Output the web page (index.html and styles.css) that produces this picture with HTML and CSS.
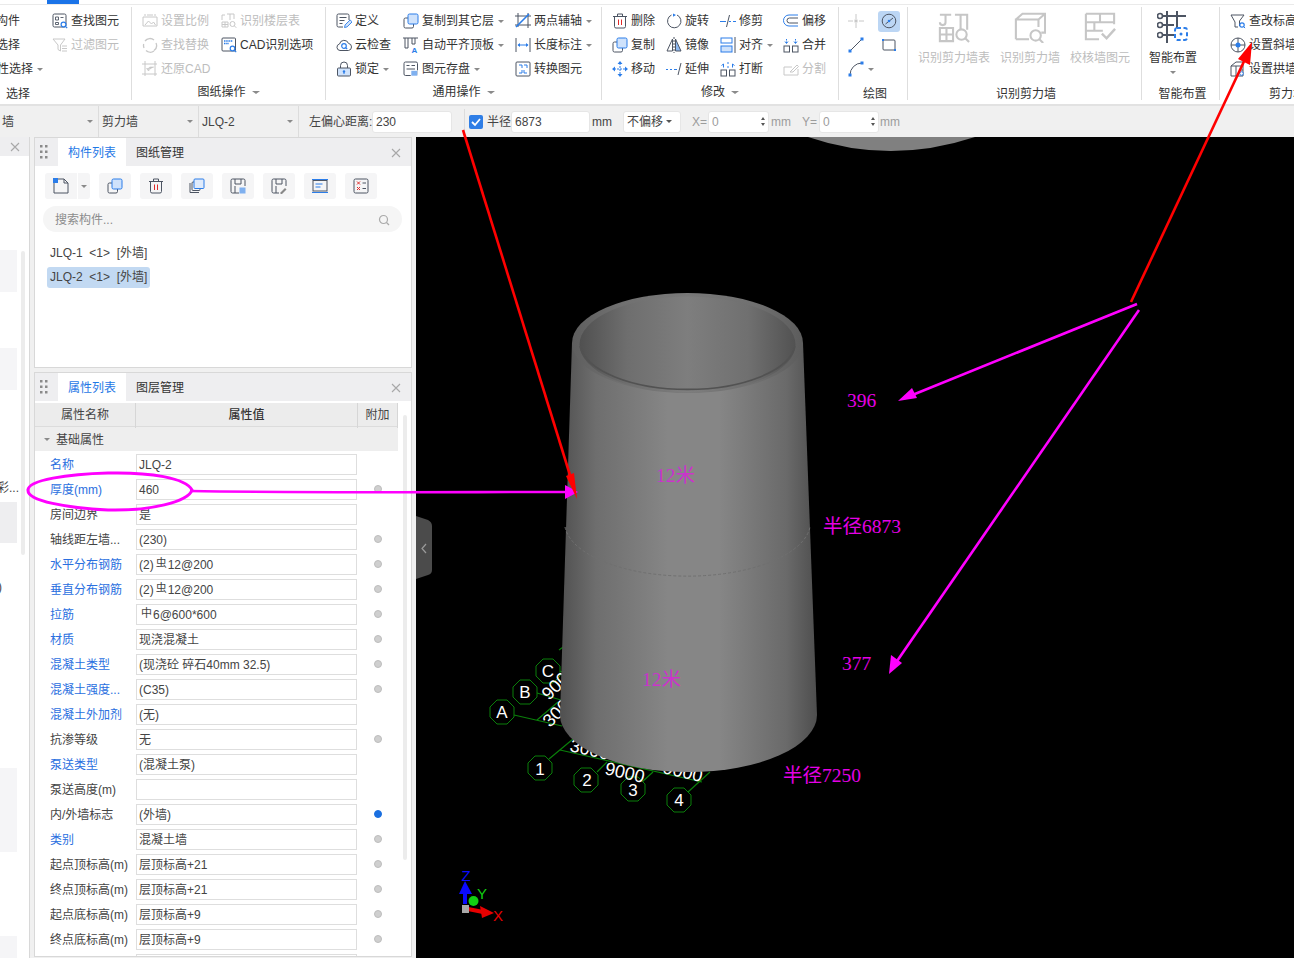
FILE: index.html
```html
<!DOCTYPE html>
<html lang="zh-CN">
<head>
<meta charset="utf-8">
<title>剪力墙</title>
<link rel="stylesheet" href="styles.css">
</head>
<body>
<svg class="defs" aria-hidden="true">
  <defs>
    <symbol id="i-find" viewBox="0 0 16 16"><rect x="1" y="1" width="13" height="13" rx="1.5" fill="none" stroke="#4d5563"/><path d="M3.5 4h3v3h-3zM8.5 4.5h3M3.5 9.5h3v2h-3z" fill="none" stroke="#4d5563" stroke-width=".9"/><circle cx="11.5" cy="11.5" r="2.4" fill="#fff" stroke="#2b7de9" stroke-width="1.2"/><path d="M13.2 13.2l2 2" stroke="#2b7de9" stroke-width="1.2"/></symbol>
    <symbol id="i-filter" viewBox="0 0 16 16"><path d="M1 2h12L8.5 8v6l-2.500-1.500V8z" fill="none" stroke="#c8c8c8"/><path d="M10 9h5M10 11.500h5M10 14h5" stroke="#c8c8c8"/></symbol>
    <symbol id="i-scale" viewBox="0 0 16 16"><path d="M1 4h14v9H1z" fill="none" stroke="#c8c8c8"/><path d="M3 1v2M13 1v2M5 2h6" stroke="#c8c8c8"/><path d="M3 12l3.500-4 3 3 2-2 2 3" fill="none" stroke="#c8c8c8"/></symbol>
    <symbol id="i-floors" viewBox="0 0 16 16"><path d="M1 2h3M1 2v5M6 1h7v5M9 1v6M1 9h6v5H1zM4 9v5M1 11.500h6" fill="none" stroke="#c8c8c8"/><circle cx="11.500" cy="11" r="2.500" fill="none" stroke="#c8c8c8"/><path d="M13.300 12.800l2 2" stroke="#c8c8c8"/></symbol>
    <symbol id="i-replace" viewBox="0 0 16 16"><path d="M3 4a6.200 6.200 0 0 1 9-1M14 6a6.200 6.200 0 0 1-2 7.500M12 14a6.200 6.200 0 0 1-8-.500M2 11a6.200 6.200 0 0 1-.3-4" fill="none" stroke="#c8c8c8" stroke-width="1.300"/></symbol>
    <symbol id="i-cad" viewBox="0 0 16 16"><rect x="1" y="1" width="13.500" height="13" rx="1" fill="none" stroke="#4d5563"/><path d="M3 4h9M3 6.500h5" stroke="#2b7de9" stroke-width="1.400" stroke-dasharray="1.500 .7"/><circle cx="11.500" cy="11.500" r="2.300" fill="#fff" stroke="#2b7de9" stroke-width="1.200"/><path d="M13.200 13.200l2 2" stroke="#2b7de9" stroke-width="1.200"/></symbol>
    <symbol id="i-restore" viewBox="0 0 16 16"><path d="M3 0v15M0 13h15M0 3h15M13 0v15" fill="none" stroke="#c8c8c8"/><path d="M12 6H8.500a2 2 0 0 0-2 2v1M6.500 10L4.500 7.500h4z" fill="#c8c8c8" stroke="#c8c8c8" stroke-width=".6"/></symbol>
    <symbol id="i-def" viewBox="0 0 16 16"><path d="M13 7V2.500A1.500 1.500 0 0 0 11.500 1h-9A1.500 1.500 0 0 0 1 2.500v10A1.500 1.500 0 0 0 2.500 14H7" fill="none" stroke="#4d5563"/><path d="M3.500 4.500h7M3.500 7.500h5M3.500 10.500h3" stroke="#4d5563"/><path d="M8.500 14.500l.6-2.600 5-5 2 2-5 5z" fill="#cfe2fb" stroke="#2b7de9" stroke-width=".9"/></symbol>
    <symbol id="i-cloud" viewBox="0 0 16 16"><path d="M4 13.500a3.300 3.300 0 0 1-.5-6.500 4.700 4.700 0 0 1 9-.6 3.600 3.600 0 0 1 0 7.100z" fill="none" stroke="#4d5563"/><circle cx="8" cy="9" r="2.300" fill="none" stroke="#2b7de9" stroke-width="1.200"/><path d="M9.700 10.700l1.500 1.500" stroke="#2b7de9" stroke-width="1.200"/></symbol>
    <symbol id="i-lock" viewBox="0 0 16 16"><path d="M4.500 7V4.500a3.500 3.500 0 0 1 7 0V7" fill="none" stroke="#4d5563"/><rect x="1.500" y="7" width="13" height="8" rx="1" fill="#cfe2fb" stroke="#4d5563"/><circle cx="8" cy="10.500" r="1.200" fill="#2b7de9"/><path d="M8 10.500V13" stroke="#2b7de9"/></symbol>
    <symbol id="i-dup" viewBox="0 0 16 16"><rect x="1" y="5" width="9.500" height="10" rx="1.500" fill="none" stroke="#4d5563"/><rect x="5" y="1" width="10" height="10" rx="1.500" fill="#cfe2fb" stroke="#2b7de9"/></symbol>
    <symbol id="i-flush" viewBox="0 0 16 16"><path d="M0 1h15" stroke="#4d5563"/><path d="M2 1v10h3V1M9 1v6h3V1" fill="none" stroke="#4d5563"/><text x="8.500" y="15.500" class="svgA">A</text></symbol>
    <symbol id="i-store" viewBox="0 0 16 16"><rect x="1" y="1" width="13.500" height="13.500" rx="1.500" fill="none" stroke="#4d5563"/><path d="M3.500 4.500h3M8.500 4.500h3.500M3.500 8h8.500" stroke="#4d5563"/><rect x="8" y="9.500" width="6.500" height="5.500" fill="#7fb0ef" stroke="#fff" stroke-width=".6"/></symbol>
    <symbol id="i-axis" viewBox="0 0 16 16"><path d="M3 0v14M0 12h16M0 3h16M13 0v15" fill="none" stroke="#4d5563"/><path d="M1 14L14 1" stroke="#2b7de9" stroke-width="1.600"/></symbol>
    <symbol id="i-dim" viewBox="0 0 16 16"><path d="M1 1v14M15 1v14" stroke="#4d5563"/><path d="M3 8h10" stroke="#2b7de9"/><path d="M2.500 8l2.500-2v4zM13.500 8l-2.500-2v4z" fill="#2b7de9"/></symbol>
    <symbol id="i-conv" viewBox="0 0 16 16"><rect x="1" y="1" width="14" height="14" rx="1" fill="none" stroke="#4d5563"/><path d="M4 4h3v3M12 12H9V9M9 4h3v3M4 12h3V9" fill="none" stroke="#2b7de9"/></symbol>
    <symbol id="i-del" viewBox="0 0 16 16"><path d="M1 3.500h14M5.500 3.500V1h5v2.500" fill="none" stroke="#4d5563"/><path d="M2.500 3.500v10a1.500 1.500 0 0 0 1.500 1.500h8a1.500 1.500 0 0 0 1.500-1.500v-10" fill="none" stroke="#4d5563"/><path d="M6.500 6.500v5.500M9.500 6.500v5.500" stroke="#e12a2a"/></symbol>
    <symbol id="i-rot" viewBox="0 0 16 16"><path d="M5.500 2A6.700 6.700 0 1 0 11 2" fill="none" stroke="#4d5563"/><path d="M7 .5L10 2 7 3.800z" fill="#2b7de9"/></symbol>
    <symbol id="i-trim" viewBox="0 0 16 16"><path d="M0 8.500h6M9 8.500h2M13 8.500h3" stroke="#2b7de9"/><path d="M9.500 2L6.500 14" stroke="#4d5563"/></symbol>
    <symbol id="i-off" viewBox="0 0 16 16"><path d="M15 2H6a5.500 5.500 0 0 0 0 11h9" fill="none" stroke="#2b7de9"/><path d="M15 5H6.500a2.500 2.500 0 0 0 0 5H15" fill="none" stroke="#4d5563"/></symbol>
    <symbol id="i-mir" viewBox="0 0 16 16"><path d="M6.500 2L1 14h5.500z" fill="#fff" stroke="#4d5563"/><path d="M9.500 2L15 14H9.500z" fill="#8db8f0" stroke="#4d5563"/><path d="M8 0v16" stroke="#4d5563" stroke-dasharray="2 1"/></symbol>
    <symbol id="i-align" viewBox="0 0 16 16"><rect x="1" y="1" width="11" height="5" fill="none" stroke="#2b7de9"/><rect x="1" y="9" width="11" height="6" fill="#cfe2fb" stroke="#2b7de9"/><path d="M15 0v16" stroke="#4d5563"/></symbol>
    <symbol id="i-merge" viewBox="0 0 16 16"><rect x="1" y="9" width="5.500" height="6" fill="none" stroke="#4d5563"/><rect x="9.500" y="9" width="5.500" height="6" fill="none" stroke="#4d5563"/><path d="M3.500 2v4M12.500 2v4" stroke="#2b7de9" stroke-dasharray="1.500 1"/><path d="M2 4.500l1.500 2 1.500-2M11 4.500l1.500 2 1.500-2" fill="none" stroke="#2b7de9"/></symbol>
    <symbol id="i-move" viewBox="0 0 16 16"><path d="M8 2v12M2 8h12" stroke="#2b7de9" stroke-dasharray="2 1"/><path d="M8 0l2.500 3h-5zM8 16l2.500-3h-5zM0 8l3-2.500v5zM16 8l-3-2.500v5z" fill="#2b7de9"/></symbol>
    <symbol id="i-ext" viewBox="0 0 16 16"><path d="M0 8.500h2M4 8.500h2M8 8.500h3" stroke="#2b7de9"/><path d="M15 2l-3 12" stroke="#4d5563"/></symbol>
    <symbol id="i-brk" viewBox="0 0 16 16"><rect x="1" y="9" width="5.500" height="6" fill="none" stroke="#4d5563"/><rect x="9.500" y="9" width="5.500" height="6" fill="none" stroke="#4d5563"/><path d="M3.500 6.500V3L1.500 4.500M12.500 6.500V3l2 1.500" fill="none" stroke="#2b7de9"/><path d="M7 2h2M7 6h2" stroke="#2b7de9"/></symbol>
    <symbol id="i-split" viewBox="0 0 16 16"><path d="M15 8v6H1V6h8" fill="none" stroke="#c8c8c8"/><path d="M7 11l7-7 1.500 1.500L10 11z" fill="none" stroke="#c8c8c8"/></symbol>
    <symbol id="i-pt" viewBox="0 0 16 16"><path d="M0 8h5M11 8h5M8 1v5M8 10v5" stroke="#c8c8c8"/><rect x="6.500" y="6.500" width="3" height="3" fill="#c8c8c8"/></symbol>
    <symbol id="i-clock" viewBox="0 0 16 16"><circle cx="8" cy="8" r="6.800" fill="none" stroke="#4d5563"/><path d="M4.500 11L12 5" stroke="#4d5563"/><circle cx="8" cy="8" r="1.300" fill="#2b7de9"/></symbol>
    <symbol id="i-line" viewBox="0 0 16 16"><path d="M2 14L14 2" stroke="#4d5563"/><rect x="0.500" y="12.500" width="3" height="3" fill="#2b7de9"/><rect x="12.500" y="0.500" width="3" height="3" fill="#2b7de9"/></symbol>
    <symbol id="i-rect" viewBox="0 0 16 16"><rect x="2" y="3" width="12" height="10" rx="1" fill="none" stroke="#4d5563"/><rect x="1" y="2" width="2" height="2" fill="#2b7de9"/><rect x="13" y="12" width="2" height="2" fill="#2b7de9"/></symbol>
    <symbol id="i-arc" viewBox="0 0 16 16"><path d="M2 14A12 12 0 0 1 14 2" fill="none" stroke="#4d5563"/><rect x="0.500" y="12.500" width="3" height="3" fill="#2b7de9"/><rect x="12.500" y="0.500" width="3" height="3" fill="#2b7de9"/></symbol>
    <symbol id="i-level" viewBox="0 0 16 16"><path d="M1 2h13L9.500 8v5" fill="none" stroke="#4d5563"/><path d="M1 2l4 7v5h3" fill="none" stroke="#4d5563"/><circle cx="12" cy="12" r="2.200" fill="none" stroke="#2b7de9" stroke-width="1.200"/><path d="M13.600 13.600l1.500 1.500" stroke="#2b7de9"/></symbol>
    <symbol id="i-slope" viewBox="0 0 16 16"><circle cx="8" cy="8" r="7" fill="none" stroke="#4d5563"/><path d="M8 1v14M1 8h14" stroke="#4d5563"/><circle cx="8" cy="8" r="2.500" fill="#2b7de9"/></symbol>
    <symbol id="i-arch" viewBox="0 0 16 16"><path d="M1 15V5l5-4h7v14H1zM1 5h12M6 5v10M9 9h4" fill="none" stroke="#4d5563"/><circle cx="11.500" cy="12.500" r="1.800" fill="#fff" stroke="#2b7de9"/></symbol>
    <symbol id="b-table" viewBox="0 0 34 34"><path d="M2 4h12M8 4v8a3 3 0 0 1-6 0M18 4h13v16M24 4v15M2 18h14v14H2zM9 18v14M2 25h14" fill="none" stroke="#c6c6c6" stroke-width="2.200"/><circle cx="25" cy="25" r="5.500" fill="#fff" stroke="#c6c6c6" stroke-width="2.200"/><path d="M29 29l4 4" stroke="#c6c6c6" stroke-width="2.200"/></symbol>
    <symbol id="b-wall" viewBox="0 0 34 34"><path d="M2 30V9h24v8M2 9l7-6h24v20h-4M26 9l7-6" fill="none" stroke="#c6c6c6" stroke-width="2.200"/><path d="M2 30h14" stroke="#c6c6c6" stroke-width="2.200"/><circle cx="23" cy="26" r="5.500" fill="#fff" stroke="#c6c6c6" stroke-width="2.200"/><path d="M27 30l4 4" stroke="#c6c6c6" stroke-width="2.200"/></symbol>
    <symbol id="b-check" viewBox="0 0 34 34"><path d="M2 3h30v11M2 3v27h14M2 12h30M2 21h18M17 3v9M11 12v9" fill="none" stroke="#c6c6c6" stroke-width="2.200"/><path d="M19 24l5 5 9-10" fill="none" stroke="#c6c6c6" stroke-width="2.600"/></symbol>
    <symbol id="b-smart" viewBox="0 0 32 32"><path d="M3 5h26M3 14h14M3 24h14M10 0v32M20 0v10M20 10v8" fill="none" stroke="#4d5563" stroke-width="2"/><circle cx="3" cy="5" r="2.500" fill="#fff" stroke="#4d5563" stroke-width="1.600"/><circle cx="3" cy="14" r="2.500" fill="#fff" stroke="#4d5563" stroke-width="1.600"/><circle cx="3" cy="24" r="2.500" fill="#fff" stroke="#4d5563" stroke-width="1.600"/><rect x="18" y="17" width="12" height="12" rx="2" fill="#fff" stroke="#2b7de9" stroke-width="2" stroke-dasharray="4 2.500"/><circle cx="24" cy="23" r="1.500" fill="#2b7de9"/></symbol>
    <symbol id="t-new" viewBox="0 0 16 16"><path d="M1 3.500V15h14V5l-4-4H5" fill="none" stroke="#4d5563"/><path d="M11 1v4h4" fill="none" stroke="#4d5563"/><rect x="0" y="0" width="5" height="5" fill="#2b7de9"/></symbol>
    <symbol id="t-multi" viewBox="0 0 16 16"><path d="M1 5v9.500h9" fill="none" stroke="#4d5563"/><rect x="3" y="4" width="8" height="8.500" rx="1" fill="none" stroke="#4d5563"/><rect x="5" y="1" width="10" height="9.500" rx="1" fill="#e0ebfb" stroke="#2b7de9"/></symbol>
    <symbol id="t-fsave" viewBox="0 0 16 16"><path d="M9 15H2.500A1.500 1.500 0 0 1 1 13.500v-11A1.500 1.500 0 0 1 2.500 1h11A1.500 1.500 0 0 1 15 2.500V8M5 1v5h6V1M5 15V8" fill="none" stroke="#4d5563"/><rect x="9.500" y="9.500" width="6" height="6" fill="#7fb0ef"/></symbol>
    <symbol id="t-pick" viewBox="0 0 16 16"><path d="M8 15H2.500A1.500 1.500 0 0 1 1 13.500v-11A1.500 1.500 0 0 1 2.500 1h11A1.500 1.500 0 0 1 15 2.500V8M5 1v5h6V1M5 15V8" fill="none" stroke="#4d5563"/><path d="M9 15l5-5 1.500 1.500-5 5z" fill="#888"/></symbol>
    <symbol id="t-list" viewBox="0 0 16 16"><path d="M0 1.500h16M0 14.500h16" stroke="#2b7de9"/><rect x="1" y="2.500" width="14" height="10.500" fill="none" stroke="#4d5563"/><path d="M3.500 6h7M3.500 9h5" stroke="#2b7de9"/></symbol>
    <symbol id="t-check" viewBox="0 0 16 16"><rect x="1" y="1" width="14" height="14" rx="1.500" fill="none" stroke="#4d5563"/><path d="M4 3.500l3 3M7 3.500l-3 3M4 9l3 3M7 9l-3 3" stroke="#e12a2a"/><path d="M9.500 5h3.500M9.500 10.500h3.500" stroke="#4d5563"/></symbol>
    <symbol id="grip" viewBox="0 0 8 14"><path d="M0 0h2.500v2.500H0zM5 0h2.500v2.500H5zM0 5.500h2.500V8H0zM5 5.500h2.500V8H5zM0 11h2.500v2.500H0zM5 11h2.500v2.500H5z" fill="#8a8a8a"/></symbol>
    <symbol id="close" viewBox="0 0 10 10"><path d="M1 1l8 8M9 1L1 9" stroke="#a8a8a8" stroke-width="1.100"/></symbol>
    <symbol id="search" viewBox="0 0 12 12"><circle cx="5.500" cy="5.500" r="4" fill="none" stroke="#aaa" stroke-width="1.200"/><path d="M8.500 8.500L11 11" stroke="#aaa" stroke-width="1.200"/></symbol>
    <linearGradient id="wallGrad" x1="0" x2="1" y1="0" y2="0">
      <stop offset="0" stop-color="#505050"/><stop offset=".14" stop-color="#6e6e6e"/><stop offset=".42" stop-color="#868686"/><stop offset=".62" stop-color="#868686"/><stop offset=".88" stop-color="#6a6a6a"/><stop offset="1" stop-color="#4e4e4e"/>
    </linearGradient>
    <linearGradient id="rimGrad" x1="0" x2="1" y1="0" y2="0">
      <stop offset="0" stop-color="#5e5e5e"/><stop offset=".2" stop-color="#707070"/><stop offset=".5" stop-color="#787878"/><stop offset=".8" stop-color="#707070"/><stop offset="1" stop-color="#5c5c5c"/>
    </linearGradient>
    <linearGradient id="innerGrad" x1="0" x2="1" y1="0" y2="0">
      <stop offset="0" stop-color="#505050"/><stop offset=".22" stop-color="#6e6e6e"/><stop offset=".5" stop-color="#7e7e7e"/><stop offset=".78" stop-color="#707070"/><stop offset="1" stop-color="#525252"/>
    </linearGradient>
    <polygon id="oct" points="-5,-12 5,-12 12,-5 12,5 5,12 -5,12 -12,5 -12,-5" fill="#000" stroke="#0a7f0a"/>
  </defs>
</svg>

<div class="page">
  <header class="ribbon">
    <div class="tabline"><span class="tabmark"></span></div>
    <div class="groups">
      <section class="group g1">
        <div class="cols">
          <div class="col c-clip">
            <div class="item p11"><span>构件</span></div>
            <div class="item p11"><span>选择</span></div>
            <div class="item"><span>属性选择</span><i class="caret"></i></div>
          </div>
          <div class="col">
            <div class="item"><svg class="ic"><use href="#i-find"/></svg><span>查找图元</span></div>
            <div class="item off"><svg class="ic"><use href="#i-filter"/></svg><span>过滤图元</span></div>
          </div>
        </div>
        <div class="glabel left">选择</div>
      </section>
      <section class="group g2">
        <div class="cols">
          <div class="col w79">
            <div class="item off"><svg class="ic"><use href="#i-scale"/></svg><span>设置比例</span></div>
            <div class="item off"><svg class="ic"><use href="#i-replace"/></svg><span>查找替换</span></div>
            <div class="item off"><svg class="ic"><use href="#i-restore"/></svg><span>还原CAD</span></div>
          </div>
          <div class="col">
            <div class="item off"><svg class="ic"><use href="#i-floors"/></svg><span>识别楼层表</span></div>
            <div class="item"><svg class="ic"><use href="#i-cad"/></svg><span>CAD识别选项</span></div>
          </div>
        </div>
        <div class="glabel up">图纸操作<i class="caret lg"></i></div>
      </section>
      <section class="group g3">
        <div class="cols">
          <div class="col w67">
            <div class="item"><svg class="ic"><use href="#i-def"/></svg><span>定义</span></div>
            <div class="item"><svg class="ic"><use href="#i-cloud"/></svg><span>云检查</span></div>
            <div class="item"><svg class="ic"><use href="#i-lock"/></svg><span>锁定</span><i class="caret"></i></div>
          </div>
          <div class="col w112">
            <div class="item"><svg class="ic"><use href="#i-dup"/></svg><span>复制到其它层</span><i class="caret"></i></div>
            <div class="item"><svg class="ic"><use href="#i-flush"/></svg><span>自动平齐顶板</span><i class="caret"></i></div>
            <div class="item"><svg class="ic"><use href="#i-store"/></svg><span>图元存盘</span><i class="caret"></i></div>
          </div>
          <div class="col">
            <div class="item"><svg class="ic"><use href="#i-axis"/></svg><span>两点辅轴</span><i class="caret"></i></div>
            <div class="item"><svg class="ic"><use href="#i-dim"/></svg><span>长度标注</span><i class="caret"></i></div>
            <div class="item"><svg class="ic"><use href="#i-conv"/></svg><span>转换图元</span></div>
          </div>
        </div>
        <div class="glabel up">通用操作<i class="caret lg"></i></div>
      </section>
      <section class="group g4">
        <div class="cols">
          <div class="col w54">
            <div class="item"><svg class="ic"><use href="#i-del"/></svg><span>删除</span></div>
            <div class="item"><svg class="ic"><use href="#i-dup"/></svg><span>复制</span></div>
            <div class="item"><svg class="ic"><use href="#i-move"/></svg><span>移动</span></div>
          </div>
          <div class="col w54">
            <div class="item"><svg class="ic"><use href="#i-rot"/></svg><span>旋转</span></div>
            <div class="item"><svg class="ic"><use href="#i-mir"/></svg><span>镜像</span></div>
            <div class="item"><svg class="ic"><use href="#i-ext"/></svg><span>延伸</span></div>
          </div>
          <div class="col w63">
            <div class="item"><svg class="ic"><use href="#i-trim"/></svg><span>修剪</span></div>
            <div class="item"><svg class="ic"><use href="#i-align"/></svg><span>对齐</span><i class="caret"></i></div>
            <div class="item"><svg class="ic"><use href="#i-brk"/></svg><span>打断</span></div>
          </div>
          <div class="col">
            <div class="item"><svg class="ic"><use href="#i-off"/></svg><span>偏移</span></div>
            <div class="item"><svg class="ic"><use href="#i-merge"/></svg><span>合并</span></div>
            <div class="item off"><svg class="ic"><use href="#i-split"/></svg><span>分割</span></div>
          </div>
        </div>
        <div class="glabel up">修改<i class="caret lg"></i></div>
      </section>
      <section class="group g5">
        <div class="cols">
          <div class="col w30">
            <div class="item"><svg class="ic"><use href="#i-pt"/></svg></div>
            <div class="item"><svg class="ic"><use href="#i-line"/></svg></div>
            <div class="item"><svg class="ic"><use href="#i-arc"/></svg><i class="caret"></i></div>
          </div>
          <div class="col">
            <div class="item"><span class="active"><svg class="ic"><use href="#i-clock"/></svg></span></div>
            <div class="item p3"><svg class="ic"><use href="#i-rect"/></svg></div>
          </div>
        </div>
        <div class="glabel">绘图</div>
      </section>
      <section class="group g6">
        <div class="bigs">
          <div class="big off w72"><svg class="bigic"><use href="#b-table"/></svg><span>识别剪力墙表</span></div>
          <div class="big off w60"><svg class="bigic"><use href="#b-wall"/></svg><span>识别剪力墙</span></div>
          <div class="big off w60"><svg class="bigic"><use href="#b-check"/></svg><span>校核墙图元</span></div>
        </div>
        <div class="glabel">识别剪力墙</div>
      </section>
      <section class="group g7">
        <div class="bigs">
          <div class="big w48"><svg class="bigic"><use href="#b-smart"/></svg><span>智能布置</span><i class="caret below"></i></div>
        </div>
        <div class="glabel">智能布置</div>
      </section>
      <section class="group g8">
        <div class="cols">
          <div class="col">
            <div class="item"><svg class="ic"><use href="#i-level"/></svg><span>查改标高</span></div>
            <div class="item"><svg class="ic"><use href="#i-slope"/></svg><span>设置斜墙</span></div>
            <div class="item"><svg class="ic"><use href="#i-arch"/></svg><span>设置拱墙</span></div>
          </div>
        </div>
        <div class="glabel left">剪力墙</div>
      </section>
    </div>
  </header>

  <div class="optbar">
    <div class="sel"><span>墙</span><i class="caret"></i></div>
    <div class="sel"><span>剪力墙</span><i class="caret"></i></div>
    <div class="sel"><span>JLQ-2</span><i class="caret"></i></div>
    <span class="olabel o-left">左偏心距离:</span>
    <div class="oinput w80">230</div>
    <span class="odiv"></span>
    <span class="check"><svg viewBox="0 0 14 14"><path d="M3 7l3 3 5-6" fill="none" stroke="#fff" stroke-width="1.800"/></svg></span>
    <span class="olabel o-rad">半径</span>
    <div class="oinput w79">6873</div>
    <span class="olabel o-mm">mm</span>
    <div class="oinput w58 seldrop"><span>不偏移</span><i class="caret dark"></i></div>
    <span class="olabel gray o-x">X=</span>
    <div class="oinput w61 gray spin"><span>0</span><span class="spinner"><i class="up"></i><i class="down"></i></span></div>
    <span class="olabel gray o-mm2">mm</span>
    <span class="olabel gray o-y">Y=</span>
    <div class="oinput w60 gray spin"><span>0</span><span class="spinner"><i class="up"></i><i class="down"></i></span></div>
    <span class="olabel gray o-mm3">mm</span>
  </div>

  <main class="main">
    <aside class="strip">
      <div class="striphead"><svg class="closeic"><use href="#close"/></svg></div>
      <div class="stripbody">
        <div class="stripcol">
          <div class="sb h42 s1"></div>
          <div class="sb h42 s2"></div>
          <div class="cut s3">彩...</div>
          <div class="sb h41 dark s4"></div>
          <div class="cut s5">)</div>
          <div class="sb h84 s6"></div>
          <div class="sb h22 s7"></div>
        </div>
        <div class="stripscroll"></div>
      </div>
    </aside>

    <div class="panels">
      <section class="panel top">
        <div class="phead">
          <svg class="gripic"><use href="#grip"/></svg>
          <span class="tab on">构件列表</span><span class="tab">图纸管理</span>
          <svg class="closeic push"><use href="#close"/></svg>
        </div>
        <div class="tools">
          <span class="tsplit"><span class="tb wide"><svg class="tic"><use href="#t-new"/></svg></span><span class="tb narrow"><i class="caret"></i></span></span>
          <span class="tb"><svg class="tic"><use href="#i-dup"/></svg></span>
          <span class="tb"><svg class="tic"><use href="#i-del"/></svg></span>
          <span class="tb"><svg class="tic"><use href="#t-multi"/></svg></span>
          <span class="tb"><svg class="tic"><use href="#t-fsave"/></svg></span>
          <span class="tb"><svg class="tic"><use href="#t-pick"/></svg></span>
          <span class="tb"><svg class="tic"><use href="#t-list"/></svg></span>
          <span class="tb"><svg class="tic"><use href="#t-check"/></svg></span>
        </div>
        <div class="searchbox"><span>搜索构件...</span><svg class="sic"><use href="#search"/></svg></div>
        <ul class="clist">
          <li>JLQ-1&nbsp; &lt;1&gt;&nbsp; [外墙]</li>
          <li class="sel-li">JLQ-2&nbsp; &lt;1&gt;&nbsp; [外墙]</li>
        </ul>
      </section>

      <section class="panel bottom">
        <div class="phead">
          <svg class="gripic"><use href="#grip"/></svg>
          <span class="tab on">属性列表</span><span class="tab">图层管理</span>
          <svg class="closeic push"><use href="#close"/></svg>
        </div>
        <div class="pbody">
          <div class="ptable">
            <div class="thead"><span class="th">属性名称</span><span class="th strong">属性值</span><span class="th">附加</span></div>
            <div class="tsec"><i class="caret"></i>基础属性</div>
            <div class="row"><span class="name link">名称</span><span class="val">JLQ-2</span><span class="dotc"></span></div>
            <div class="row"><span class="name link">厚度(mm)</span><span class="val">460</span><span class="dotc"><i class="dot"></i></span></div>
            <div class="row"><span class="name">房间边界</span><span class="val">是</span><span class="dotc"></span></div>
            <div class="row"><span class="name">轴线距左墙...</span><span class="val">(230)</span><span class="dotc"><i class="dot"></i></span></div>
            <div class="row"><span class="name link">水平分布钢筋</span><span class="val">(2)<small class="bar">虫</small>12@200</span><span class="dotc"><i class="dot"></i></span></div>
            <div class="row"><span class="name link">垂直分布钢筋</span><span class="val">(2)<small class="bar">虫</small>12@200</span><span class="dotc"><i class="dot"></i></span></div>
            <div class="row"><span class="name link">拉筋</span><span class="val"><small class="bar">中</small>6@600*600</span><span class="dotc"><i class="dot"></i></span></div>
            <div class="row"><span class="name link">材质</span><span class="val">现浇混凝土</span><span class="dotc"><i class="dot"></i></span></div>
            <div class="row"><span class="name link">混凝土类型</span><span class="val">(现浇砼 碎石40mm 32.5)</span><span class="dotc"><i class="dot"></i></span></div>
            <div class="row"><span class="name link">混凝土强度...</span><span class="val">(C35)</span><span class="dotc"><i class="dot"></i></span></div>
            <div class="row"><span class="name link">混凝土外加剂</span><span class="val">(无)</span><span class="dotc"></span></div>
            <div class="row"><span class="name">抗渗等级</span><span class="val">无</span><span class="dotc"><i class="dot"></i></span></div>
            <div class="row"><span class="name link">泵送类型</span><span class="val">(混凝土泵)</span><span class="dotc"></span></div>
            <div class="row"><span class="name">泵送高度(m)</span><span class="val"></span><span class="dotc"></span></div>
            <div class="row"><span class="name">内/外墙标志</span><span class="val">(外墙)</span><span class="dotc"><i class="dot blue"></i></span></div>
            <div class="row"><span class="name link">类别</span><span class="val">混凝土墙</span><span class="dotc"><i class="dot"></i></span></div>
            <div class="row"><span class="name">起点顶标高(m)</span><span class="val">层顶标高+21</span><span class="dotc"><i class="dot"></i></span></div>
            <div class="row"><span class="name">终点顶标高(m)</span><span class="val">层顶标高+21</span><span class="dotc"><i class="dot"></i></span></div>
            <div class="row"><span class="name">起点底标高(m)</span><span class="val">层顶标高+9</span><span class="dotc"><i class="dot"></i></span></div>
            <div class="row"><span class="name">终点底标高(m)</span><span class="val">层顶标高+9</span><span class="dotc"><i class="dot"></i></span></div>
            <div class="row"><span class="name"></span><span class="val"></span><span class="dotc"></span></div>
          </div>
          <div class="pscroll"></div>
        </div>
      </section>
    </div>

    <div class="canvas">
      <svg class="scene" viewBox="416 137 878 821">
        <rect x="416" y="137" width="878" height="821" fill="#000"/>
        <path d="M808 137Q890 165 975 137Z" fill="#808080"/>

        <g class="grid">
          <path d="M514 715L562 726M549 759L573 739M560 750L702 782M597 772L607 762M642 782L653 772M688 792L710 772M537 720L558 702M537 693L561 700M558 671L566 672M559 650L566 645"/>
          <use href="#oct" x="502" y="712"/><use href="#oct" x="525" y="692"/><use href="#oct" x="548" y="671"/>
          <use href="#oct" x="540" y="768"/><use href="#oct" x="586" y="780"/><use href="#oct" x="633" y="789"/><use href="#oct" x="679" y="800"/>
        </g>
        <g class="gridtext">
          <text x="502" y="718">A</text><text x="525" y="698">B</text><text x="548" y="677">C</text>
          <text x="540" y="775">1</text><text x="587" y="786">2</text><text x="633" y="796">3</text><text x="679" y="806">4</text>
        </g>
        <g class="dimtext">
          <text transform="translate(604 774) rotate(13)">9000</text>
          <text transform="translate(569 751) rotate(13)">3000</text>
          <text transform="translate(662 773) rotate(13)">9000</text>
          <text transform="translate(549 701) rotate(-45)">9000</text>
          <text transform="translate(550 728) rotate(-45)">3000</text>
        </g>

        <path d="M572 343L560 715A128.500 57 0 0 0 817 715L803 343Z" fill="url(#wallGrad)"/>
        <ellipse cx="687.500" cy="343" rx="115.500" ry="50" fill="url(#rimGrad)"/>
        <ellipse cx="687.500" cy="344.500" rx="108" ry="48" fill="url(#innerGrad)"/>
        <path d="M580 346A108 48 0 0 0 795 346" fill="none" stroke="#525252" stroke-width="1.600"/>
        <path d="M565 527A123 54 0 0 0 810 527" fill="none" stroke="#707070" stroke-dasharray="3 2"/>

        <g class="mag">
          <text x="847" y="407">396</text>
          <text x="823" y="533">半径6873</text>
          <text x="842" y="670">377</text>
          <text x="783" y="782">半径7250</text>
          <text class="thin" x="656" y="482">12米</text>
          <text class="thin" x="642" y="686">12米</text>
        </g>

        <g class="axes">
          <path d="M465 904V890" stroke="#0a0aff" stroke-width="4"/>
          <path d="M465 881L459 894H472Z" fill="#0a0aff"/>
          <path d="M468 909L483 912" stroke="#e80000" stroke-width="4"/>
          <path d="M494 913L480 906L482 918Z" fill="#e80000"/>
          <circle cx="473.500" cy="901" r="5" fill="#12d012"/>
          <rect x="462" y="905" width="7" height="8" fill="#a8a8a8"/>
          <text x="466" y="881" fill="#0a0aff">Z</text>
          <text x="482" y="899" fill="#12d012">Y</text>
          <text x="498" y="921" fill="#e80000">X</text>
        </g>

        <path d="M416 516L428 520Q432 522 432 526V570Q432 574 428 575L416 579Z" fill="#4b4b4b"/>
        <path d="M426 544L422 548.500L426 553" fill="none" stroke="#9a9a9a" stroke-width="1.200"/>
      </svg>
    </div>
  </main>

  <svg class="overlay" viewBox="0 0 1294 958">
    <g class="pen-m">
      <path class="ring" d="M192 490C186 478 150 472 108 473C68 474 28 480 28 490C27 501 68 508 108 510C150 511 188 502 192 490Z"/>
      <path d="M190 491C300 493 450 492 570 492"/>
      <path d="M1137 304L905 398"/>
      <path d="M1139 310L895 664"/>
    </g>
    <path d="M578 492L565 485V499Z" fill="#f0f"/>
    <path d="M898 401L912 388L917 398Z" fill="#f0f"/>
    <path d="M889 674L891 655L902 663Z" fill="#f0f"/>
    <g class="pen-r">
      <path d="M463 130L574 488"/>
      <path d="M1131 302L1247 55"/>
    </g>
    <path d="M577 499L566 476L574 473Z" fill="#f00"/>
    <path d="M1252 42L1238 59L1250 65Z" fill="#f00"/>
  </svg>
</div>
</body>
</html>
```

FILE: styles.css
```css
* { box-sizing: border-box; }
html, body { margin: 0; padding: 0; }
body {
  width: 1294px;
  height: 958px;
  overflow: hidden;
  font-family: "Liberation Sans", "Noto Sans CJK SC", sans-serif;
  font-size: 12px;
  line-height: 16px;
  color: #333;
  background: #f0f0f0;
}
.defs { position: absolute; width: 0; height: 0; }
.svgA { font: 700 8px "Liberation Sans", sans-serif; fill: #2b7de9; }
.page { position: relative; width: 1294px; height: 958px; overflow: hidden; display: flex; flex-direction: column; }

/* ribbon */
.ribbon { height: 106px; flex: none; background: #fff; border-bottom: 2px solid #e2e2e2; }
.tabline { height: 5px; border-bottom: 1px solid #eaeaea; }
.tabmark { display: block; width: 32px; height: 4px; margin-left: 47px; background: #1a73e8; }
.groups { display: flex; height: 95px; padding-top: 2px; }
.group { flex: none; border-right: 1px solid #dedede; display: flex; flex-direction: column; height: 93px; padding-left: 10px; }
.g1 { width: 132px; padding-left: 0; }
.g2 { width: 194px; }
.g3 { width: 276px; }
.g4 { width: 237px; }
.g5 { width: 69px; padding-left: 9px; }
.g6 { width: 234px; }
.g7 { width: 78px; padding-left: 7px; }
.g8 { width: 134px; border-right: 0; }
.cols { display: flex; height: 78px; padding-top: 2px; flex: none; }
.col { display: flex; flex-direction: column; flex: none; }
.c-clip { width: 67px; margin-left: -15px; }
.p11 { padding-left: 11px; }
.p3 { padding-left: 3px; }
.w30 { width: 30px; }
.w54 { width: 54px; }
.w63 { width: 63px; }
.w67 { width: 67px; }
.w79 { width: 79px; }
.w112 { width: 112px; }
.item { display: flex; align-items: center; gap: 3px; height: 24px; white-space: nowrap; }
.item.off, .big.off { color: #bdbdbd; }
.ic { width: 16px; height: 16px; flex: none; }
.caret { display: inline-block; flex: none; width: 0; height: 0; margin-left: 1px; border-left: 3px solid transparent; border-right: 3px solid transparent; border-top: 3px solid #8a8a8a; }
.caret.lg { margin-left: 6px; border-left-width: 4px; border-right-width: 4px; vertical-align: 2px; }
.caret.below { margin: 5px 0 0; }
.caret.dark { border-top-color: #555; }
.active { display: flex; align-items: center; justify-content: center; width: 22px; height: 21px; border-radius: 3px; background: #bcd6f4; }
.glabel { height: 16px; margin: 1px 0 0 -10px; text-align: center; white-space: nowrap; }
.glabel.up { margin-top: -1px; }
.glabel.left { text-align: left; margin-left: 0; padding-left: 6px; }
.g5 .glabel { margin-left: -5px; }
.g6 .glabel { margin-left: -7px; }
.g7 .glabel { margin-left: -3px; }
.g8 .glabel.left { padding-left: 39px; }
.bigs { display: flex; gap: 10px; height: 78px; padding-top: 1px; flex: none; }
.big { display: flex; flex-direction: column; align-items: center; white-space: nowrap; flex: none; }
.w72 { width: 72px; }
.w60 { width: 60px; }
.w48 { width: 48px; }
.bigic { width: 32px; height: 32px; margin-top: 3px; margin-bottom: 7px; flex: none; }

/* options bar */
.optbar { height: 31px; flex: none; display: flex; align-items: center; background: #f0f0f0; white-space: nowrap; color: #444; }
.sel { width: 100px; height: 31px; flex: none; display: flex; align-items: center; justify-content: space-between; padding: 0 5px 0 3px; border-right: 1px solid #dcdcdc; }
.sel:first-child { width: 99px; padding-left: 2px; }
.olabel { flex: none; }
.o-left { margin-left: 10px; width: 63px; }
.o-rad { margin-left: 4px; width: 24px; }
.o-mm { margin-left: 2px; width: 21px; }
.o-x { margin-left: 11px; width: 16px; }
.o-mm2 { margin-left: 2px; width: 21px; }
.o-y { margin-left: 10px; width: 17px; }
.o-mm3 { margin-left: 1px; }
.gray { color: #9c9c9c; }
.oinput { flex: none; height: 22px; display: flex; align-items: center; padding: 0 3px; background: #fff; border: 1px solid #e6e6e6; border-radius: 3px; }
.w80 { width: 80px; }
.w79 { width: 79px; }
.w58 { width: 58px; margin-left: 10px; }
.w61 { width: 61px; }
.seldrop { justify-content: space-between; padding-right: 8px; }
.spin { justify-content: space-between; padding-right: 3px; }
.spinner { display: flex; flex-direction: column; gap: 3px; }
.spinner i { display: block; width: 0; height: 0; border-left: 2.500px solid transparent; border-right: 2.500px solid transparent; }
.spinner .up { border-bottom: 3px solid #555; }
.spinner .down { border-top: 3px solid #555; }
.odiv { width: 1px; height: 26px; margin: 0 4px 0 12px; background: #dcdcdc; flex: none; }
.check { flex: none; width: 14px; height: 14px; border-radius: 2px; background: #2f7ee6; }
.check svg { display: block; }

/* main */
.main { flex: 1; display: flex; min-height: 0; }
.strip { width: 30px; flex: none; background: #fff; border-right: 1px solid #d8d8d8; display: flex; flex-direction: column; }
.striphead { height: 19px; flex: none; display: flex; justify-content: flex-end; align-items: center; padding-right: 9px; background: #eeeef0; }
.stripbody { flex: 1; display: flex; }
.stripcol { width: 17px; flex: none; display: flex; flex-direction: column; }
.sb { background: #f5f5f7; flex: none; }
.sb.dark { background: #eeeef0; }
.h42 { height: 42px; }
.h41 { height: 41px; }
.h84 { height: 84px; }
.h22 { height: 22px; }
.s1 { margin-top: 94px; }
.s2 { margin-top: 56px; }
.cut { height: 16px; flex: none; white-space: nowrap; margin-left: -3px; color: #444; }
.s3 { margin-top: 90px; }
.s4 { margin-top: 6px; }
.s5 { margin-top: 36px; margin-left: -2px; }
.s6 { margin-top: 173px; }
.s7 { margin-top: 84px; }
.stripscroll { width: 4px; height: 304px; margin: 95px 0 0 4px; background: #ececec; border-radius: 2px; flex: none; }

.panels { width: 378px; margin-left: 4px; flex: none; display: flex; flex-direction: column; gap: 4px; height: 820px; }
.panel { background: #fff; border: 1px solid #d8d8d8; overflow: hidden; flex: none; }
.panel.top { height: 231px; }
.panel.bottom { height: 585px; }
.phead { height: 28px; display: flex; align-items: stretch; background: #eeeef0; }
.gripic { width: 8px; height: 14px; margin: 7px 0 0 5px; flex: none; }
.tab { width: 68px; padding-top: 7px; text-align: center; color: #333; flex: none; }
.tab.on { background: #fff; color: #1f78e6; margin-left: 10px; }
.closeic { width: 10px; height: 10px; flex: none; }
.phead .closeic { margin: 10px 10px 0 auto; }
.tools { display: flex; gap: 9px; padding: 7px 0 0 10px; }
.tb { width: 32px; height: 26px; display: flex; align-items: center; justify-content: center; background: #f5f5f6; border-radius: 3px; flex: none; }
.tic { width: 16px; height: 16px; }
.tsplit { display: flex; gap: 1px; }
.tb.wide { width: 32px; border-radius: 3px 0 0 3px; }
.tb.narrow { width: 12px; border-radius: 0 3px 3px 0; }
.tb.narrow .caret { margin: 0; }
.searchbox { height: 26px; margin: 7px 9px 0 8px; padding: 1px 12px 0; display: flex; align-items: center; justify-content: space-between; background: #f5f5f5; border-radius: 13px; color: #8c8c8c; }
.sic { width: 12px; height: 12px; }
.clist { list-style: none; margin: 11px 0 0 12px; padding: 0; display: flex; flex-direction: column; align-items: flex-start; gap: 3px; }
.clist li { height: 21px; line-height: 21px; padding: 0 3px; border-radius: 3px; white-space: nowrap; color: #444; }
.clist .sel-li { background: #c2d9f2; }

.pbody { display: flex; margin-top: 2px; }
.ptable { width: 363px; flex: none; }
.thead { height: 24px; display: grid; grid-template-columns: 101px 222px 40px; background: #ececec; border-bottom: 1px solid #dcdcdc; }
.th { text-align: center; line-height: 25px; border-right: 1px solid #d6d6d6; color: #444; }
.th.strong { font-weight: 500; color: #333; }
.tsec { height: 24px; line-height: 26px; background: #eeeeee; padding-left: 9px; color: #444; }
.tsec .caret { margin: 0 6px 2px 0; vertical-align: middle; }
.row { height: 25px; display: grid; grid-template-columns: 101px 221px 41px; align-items: center; }
.tsec + .row { margin-top: 1px; }
.name { padding-left: 15px; white-space: nowrap; overflow: hidden; color: #444; }
.name.link { color: #2a6fe0; }
.val { height: 21px; line-height: 20px; padding: 0 2px; background: #fff; border: 1px solid #dedede; white-space: nowrap; color: #444; }
.bar { font-size: 11px; line-height: 0; vertical-align: 2px; margin: 0 1px 0 2px; }
.dotc { display: flex; justify-content: center; padding-bottom: 1px; }
.dot { display: block; width: 8px; height: 8px; border-radius: 50%; background: #cfcfcf; border: 1px solid #bdbdbd; }
.dot.blue { background: #1a6fe0; border-color: #1a6fe0; }
.pscroll { width: 4px; height: 445px; margin: 12px 0 0 5px; background: #ececec; border-radius: 2px; flex: none; }

/* canvas */
.canvas { flex: 1; margin-left: 4px; min-width: 0; background: #000; }
.scene { display: block; width: 878px; height: 821px; }
.grid path { fill: none; stroke: #0a7f0a; stroke-width: 1.200; }
.gridtext text { font: 17px "Liberation Sans", sans-serif; fill: #fff; text-anchor: middle; }
.dimtext text { font: 18px "Liberation Sans", sans-serif; fill: #fff; }
.mag text { font: 19.500px "Liberation Serif", "Noto Sans CJK SC", serif; fill: #e600e6; }
.mag .thin { fill: #cc33cc; }
.axes text { font: 15px "Liberation Sans", sans-serif; text-anchor: middle; }

/* annotations */
.overlay { position: absolute; left: 0; top: 0; width: 1294px; height: 958px; pointer-events: none; }
.pen-m path { fill: none; stroke: #f0f; stroke-width: 2.600; }
.pen-m .ring { stroke-width: 3; }
.pen-r path { fill: none; stroke: #f00; stroke-width: 2.600; }
```
